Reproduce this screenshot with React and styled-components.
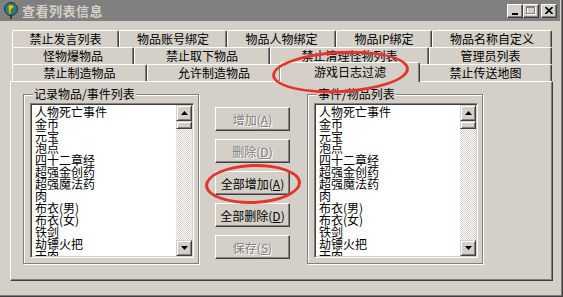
import React from 'react'
import styled, { createGlobalStyle } from 'styled-components'

const Global = createGlobalStyle`
  html, body { margin: 0; padding: 0; background: #d4d0c8; }
  body { font-family: "Noto Sans CJK SC", "DejaVu Sans", sans-serif; font-size: 12px; color: #000; }
`

const FACE = '#d4d0c8'

const Window = styled.div`
  position: relative;
  width: 563px;
  height: 297px;
  box-sizing: border-box;
  background: ${FACE};
  border-right: 1px solid #404040;
  border-bottom: 1px solid #404040;
  box-shadow: inset -1px -1px 0 #808080;
  display: flex;
  flex-direction: column;
  overflow: hidden;
`

const TitleBar = styled.div`
  height: 21px;
  margin-right: 2px;
  background: #808080;
  display: flex;
  align-items: center;
  padding: 0 3px 0 3px;
  gap: 3px;
`

const TitleText = styled.span`
  flex: 1;
  color: ${FACE};
  font-weight: bold;
  font-size: 13px;
  letter-spacing: 0.5px;
  line-height: 21px;
`

const CaptionButtons = styled.div`
  display: flex;
  align-items: center;
`

const CapBtn = styled.div`
  width: 16px;
  height: 14px;
  box-sizing: border-box;
  background: ${FACE};
  border-top: 1px solid #fff;
  border-left: 1px solid #fff;
  border-right: 1px solid #404040;
  border-bottom: 1px solid #404040;
  box-shadow: inset -1px -1px 0 #808080;
  margin-left: ${p => p.$gap || 0}px;
  display: flex;
  align-items: center;
  justify-content: center;
`

const Body = styled.div`
  flex: 1;
  padding: 9px 0 0 10px;
`

const TabControl = styled.div`
  width: 543px;
  display: flex;
  flex-direction: column;
`

const TabRow = styled.div`
  display: flex;
  height: 17px;
  margin-left: 2px;
  width: 540px;
`

const Tab = styled.div`
  width: ${p => p.$w}px;
  height: ${p => (p.$active ? 20 : 17)}px;
  margin: ${p => (p.$active ? '-2px -1px -1px -1px' : '0')};
  flex-shrink: 0;
  box-sizing: border-box;
  background: ${FACE};
  border-top: 1px solid #fff;
  border-left: 1px solid #fff;
  border-right: 1px solid #404040;
  box-shadow: inset -1px 0 0 #808080;
  border-radius: 2px 2px 0 0;
  z-index: ${p => (p.$active ? 2 : 0)};
  text-align: center;
  line-height: ${p => (p.$active ? 18 : 15)}px;
  font-size: 12px;
  white-space: nowrap;
`

const Panel = styled.div`
  width: 543px;
  height: 200px;
  box-sizing: border-box;
  border-top: 1px solid #fff;
  border-left: 1px solid #fff;
  border-right: 1px solid #404040;
  border-bottom: 1px solid #404040;
  box-shadow: inset -1px -1px 0 #808080;
  display: flex;
  align-items: flex-start;
  padding: 6px 0 0 12px;
`

const Group = styled.fieldset`
  margin: 0 0 0 ${p => p.$ml || 0}px;
  width: 176px;
  height: 176px;
  box-sizing: border-box;
  padding: 3px 5px 0 6px;
  border: 1px solid #808080;
  box-shadow: inset 1px 1px 0 #fff, 1px 1px 0 #fff;
  min-width: 0;
`

const Legend = styled.legend`
  margin-left: 3px;
  padding: 0 1px;
  font-size: 12px;
  line-height: 12px;
  background: ${FACE};
`

const ListBox = styled.div`
  width: 164px;
  height: 155px;
  box-sizing: border-box;
  border-top: 1px solid #808080;
  border-left: 1px solid #808080;
  border-right: 1px solid #fff;
  border-bottom: 1px solid #fff;
  display: flex;
  background: #fff;
  box-shadow: inset 1px 1px 0 #404040, inset -1px -1px 0 ${FACE};
  padding: 1px;
`

const Items = styled.div`
  flex: 1;
  overflow: hidden;
  padding: 1px 0 0 3px;
`

const Item = styled.div`
  height: 12px;
  line-height: 12px;
  font-size: 12px;
  white-space: nowrap;
`

const ScrollBar = styled.div`
  width: 16px;
  display: flex;
  flex-direction: column;
`

const ScrollBtn = styled.div`
  width: 16px;
  height: ${p => p.$h || 16}px;
  box-sizing: border-box;
  background: ${FACE};
  border-top: 1px solid ${FACE};
  border-left: 1px solid ${FACE};
  border-right: 1px solid #404040;
  border-bottom: 1px solid #404040;
  box-shadow: inset 1px 1px 0 #fff, inset -1px -1px 0 #808080;
  display: flex;
  align-items: center;
  justify-content: center;
  flex-shrink: 0;
`

const Track = styled.div`
  flex: 1;
  background: repeating-conic-gradient(${FACE} 0 25%, #fff 0 50%) 0 0 / 2px 2px;
`

const ButtonColumn = styled.div`
  display: flex;
  flex-direction: column;
  gap: 8px;
  margin: 19px 0 0 16px;
`

const PushButton = styled.div`
  width: 75px;
  height: 24px;
  box-sizing: border-box;
  background: ${FACE};
  border-top: 1px solid #fff;
  border-left: 1px solid #fff;
  border-right: 1px solid #404040;
  border-bottom: 1px solid #404040;
  box-shadow: inset -1px -1px 0 #808080;
  display: flex;
  align-items: center;
  justify-content: center;
  font-size: 12px;
  color: ${p => (p.$disabled ? '#808080' : '#000')};
  text-shadow: ${p => (p.$disabled ? '1px 1px 0 #fff' : 'none')};
  white-space: nowrap;
`

const Key = styled.span`
  text-decoration: underline;
`

const Ellipse = styled.div`
  position: absolute;
  left: ${p => p.$x}px;
  top: ${p => p.$y}px;
  width: ${p => p.$w}px;
  height: ${p => p.$h}px;
  box-sizing: border-box;
  border: 3px solid #e5342e;
  border-radius: 50%;
  transform: rotate(${p => p.$r || 0}deg);
  pointer-events: none;
  z-index: 5;
`

const ITEMS = ['人物死亡事件', '金币', '元宝', '泡点', '四十二章经', '超强金创药', '超强魔法药', '肉', '布衣(男)', '布衣(女)', '铁剑', '劫镖火把', '干肉']

const ROWS = [
  [['禁止发言列表', 107], ['物品账号绑定', 108], ['物品人物绑定', 109], ['物品IP绑定', 96], ['物品名称自定义', 120]],
  [['怪物爆物品', 122], ['禁止取下物品', 136], ['禁止清理怪物列表', 159], ['管理员列表', 123]],
  [['禁止制造物品', 135], ['允许制造物品', 134], ['游戏日志过滤', 138, true], ['禁止传送地图', 133]],
]

const Up = () => (
  <svg width="7" height="4" viewBox="0 0 7 4"><polygon points="3.5,0 7,4 0,4" fill="#000" /></svg>
)
const Down = () => (
  <svg width="7" height="4" viewBox="0 0 7 4"><polygon points="0,0 7,0 3.5,4" fill="#000" /></svg>
)

const AppIcon = () => (
  <svg width="16" height="17" viewBox="0 0 16 17">
    <rect x="7" y="9" width="2" height="8" fill="#5a3010" />
    <circle cx="8" cy="7" r="6.5" fill="#1f7d86" stroke="#0d3d40" strokeWidth="1" />
    <path d="M5 3 L10 3 L11 5 L9 7 L8 7 L8 12 L6 12 Z" fill="#e8c020" stroke="#7a5a00" strokeWidth="0.6" />
    <path d="M12 1 L15 0 L14 3 Z" fill="#d08020" />
  </svg>
)

const List = () => (
  <ListBox>
    <Items>
      {ITEMS.map(t => <Item key={t}>{t}</Item>)}
    </Items>
    <ScrollBar>
      <ScrollBtn><Up /></ScrollBtn>
      <ScrollBtn $h={8} />
      <Track />
      <ScrollBtn><Down /></ScrollBtn>
    </ScrollBar>
  </ListBox>
)

export default function App () {
  return (
    <>
      <Global />
      <Window>
        <TitleBar>
          <AppIcon />
          <TitleText>查看列表信息</TitleText>
          <CaptionButtons>
            <CapBtn>
              <svg width="8" height="8" viewBox="0 0 8 8"><rect x="1" y="6" width="6" height="2" fill="#000" /></svg>
            </CapBtn>
            <CapBtn>
              <svg width="10" height="9" viewBox="0 0 10 9">
                <rect x="1.5" y="1.5" width="8" height="7" fill="none" stroke="#fff" />
                <rect x="0.5" y="0.5" width="8" height="7" fill="none" stroke="#808080" />
                <rect x="0" y="0" width="9" height="2" fill="#808080" />
              </svg>
            </CapBtn>
            <CapBtn $gap={2}>
              <svg width="8" height="7" viewBox="0 0 8 7">
                <path d="M0.5 0 L7.5 7 M7.5 0 L0.5 7" stroke="#000" strokeWidth="1.6" />
              </svg>
            </CapBtn>
          </CaptionButtons>
        </TitleBar>
        <Body>
          <TabControl>
            {ROWS.map((row, i) => (
              <TabRow key={i}>
                {row.map(([label, w, active]) => (
                  <Tab key={label} $w={active ? w + 2 : w} $active={active}>{label}</Tab>
                ))}
              </TabRow>
            ))}
            <Panel>
              <Group>
                <Legend>记录物品/事件列表</Legend>
                <List />
              </Group>
              <ButtonColumn>
                <PushButton $disabled>增加(<Key>A</Key>)</PushButton>
                <PushButton $disabled>删除(<Key>D</Key>)</PushButton>
                <PushButton>全部增加(<Key>A</Key>)</PushButton>
                <PushButton>全部删除(<Key>D</Key>)</PushButton>
                <PushButton $disabled>保存(<Key>S</Key>)</PushButton>
              </ButtonColumn>
              <Group $ml={17}>
                <Legend>事件/物品列表</Legend>
                <List />
              </Group>
            </Panel>
          </TabControl>
        </Body>
        <Ellipse $x={272} $y={51} $w={137} $h={42} $r={-3} />
        <Ellipse $x={205} $y={164} $w={96} $h={40} $r={-2} />
      </Window>
    </>
  )
}
